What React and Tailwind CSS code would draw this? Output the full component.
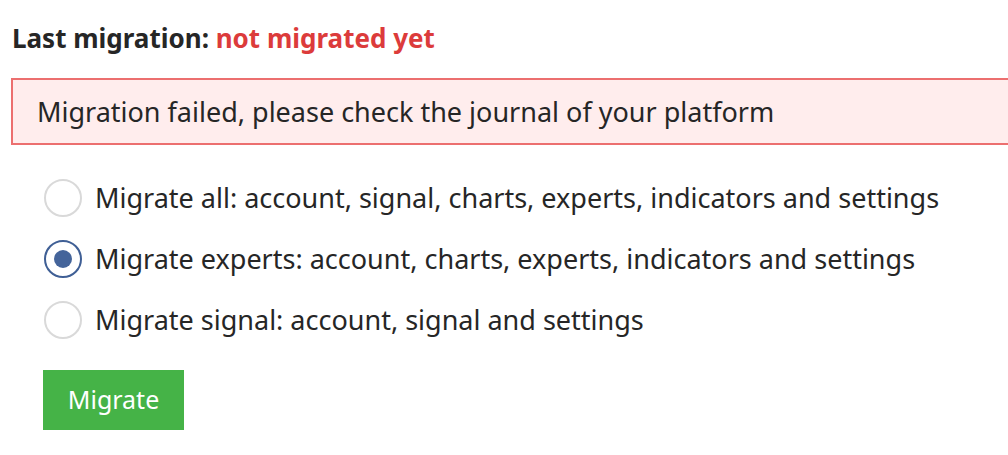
import { useState } from 'react';

const options = [
    { id: 'all', label: 'Migrate all: account, signal, charts, experts, indicators and settings' },
    { id: 'experts', label: 'Migrate experts: account, charts, experts, indicators and settings' },
    { id: 'signal', label: 'Migrate signal: account, signal and settings' },
];

export default function App() {
    const [mode, setMode] = useState('experts');

    return (
        <div className="w-[1008px] h-[455px] overflow-hidden bg-white text-[#262626] font-['Noto_Sans',sans-serif] text-[27px]">
            <div className="pl-[12px] pt-[20px] leading-[36px] text-[26px] font-bold">
                Last migration: <span className="text-[#dc3b3b]">not migrated yet</span>
            </div>

            <div className="ml-[11px] mt-[22px] -mr-[4px] h-[67px] flex items-center pl-[24px] bg-[#ffeded] border-2 border-[#ec6f6f] leading-[38px]">
                Migration failed, please check the journal of your platform
            </div>

            <div className="mt-[34px] ml-[44px] flex flex-col gap-[23px]">
                {options.map((o) => (
                    <label key={o.id} className="flex items-center gap-[13px] h-[38px] leading-[38px] cursor-pointer">
                        <input
                            type="radio"
                            name="mode"
                            className="sr-only"
                            checked={mode === o.id}
                            onChange={() => setMode(o.id)}
                        />
                        <span
                            className={
                                mode === o.id
                                    ? 'w-[38px] h-[38px] rounded-full border-2 border-[#3f5f95] flex items-center justify-center shrink-0'
                                    : 'w-[38px] h-[38px] rounded-full border-2 border-[#d9d9d9] flex items-center justify-center shrink-0'
                            }
                        >
                            {mode === o.id && <span className="w-[18px] h-[18px] rounded-full bg-[#44649a]" />}
                        </span>
                        <span className="whitespace-nowrap">{o.label}</span>
                    </label>
                ))}
            </div>

            <button className="block ml-[43px] mt-[31px] w-[141px] h-[60px] bg-[#45b347] text-white text-[25px]">
                Migrate
            </button>
        </div>
    );
}
